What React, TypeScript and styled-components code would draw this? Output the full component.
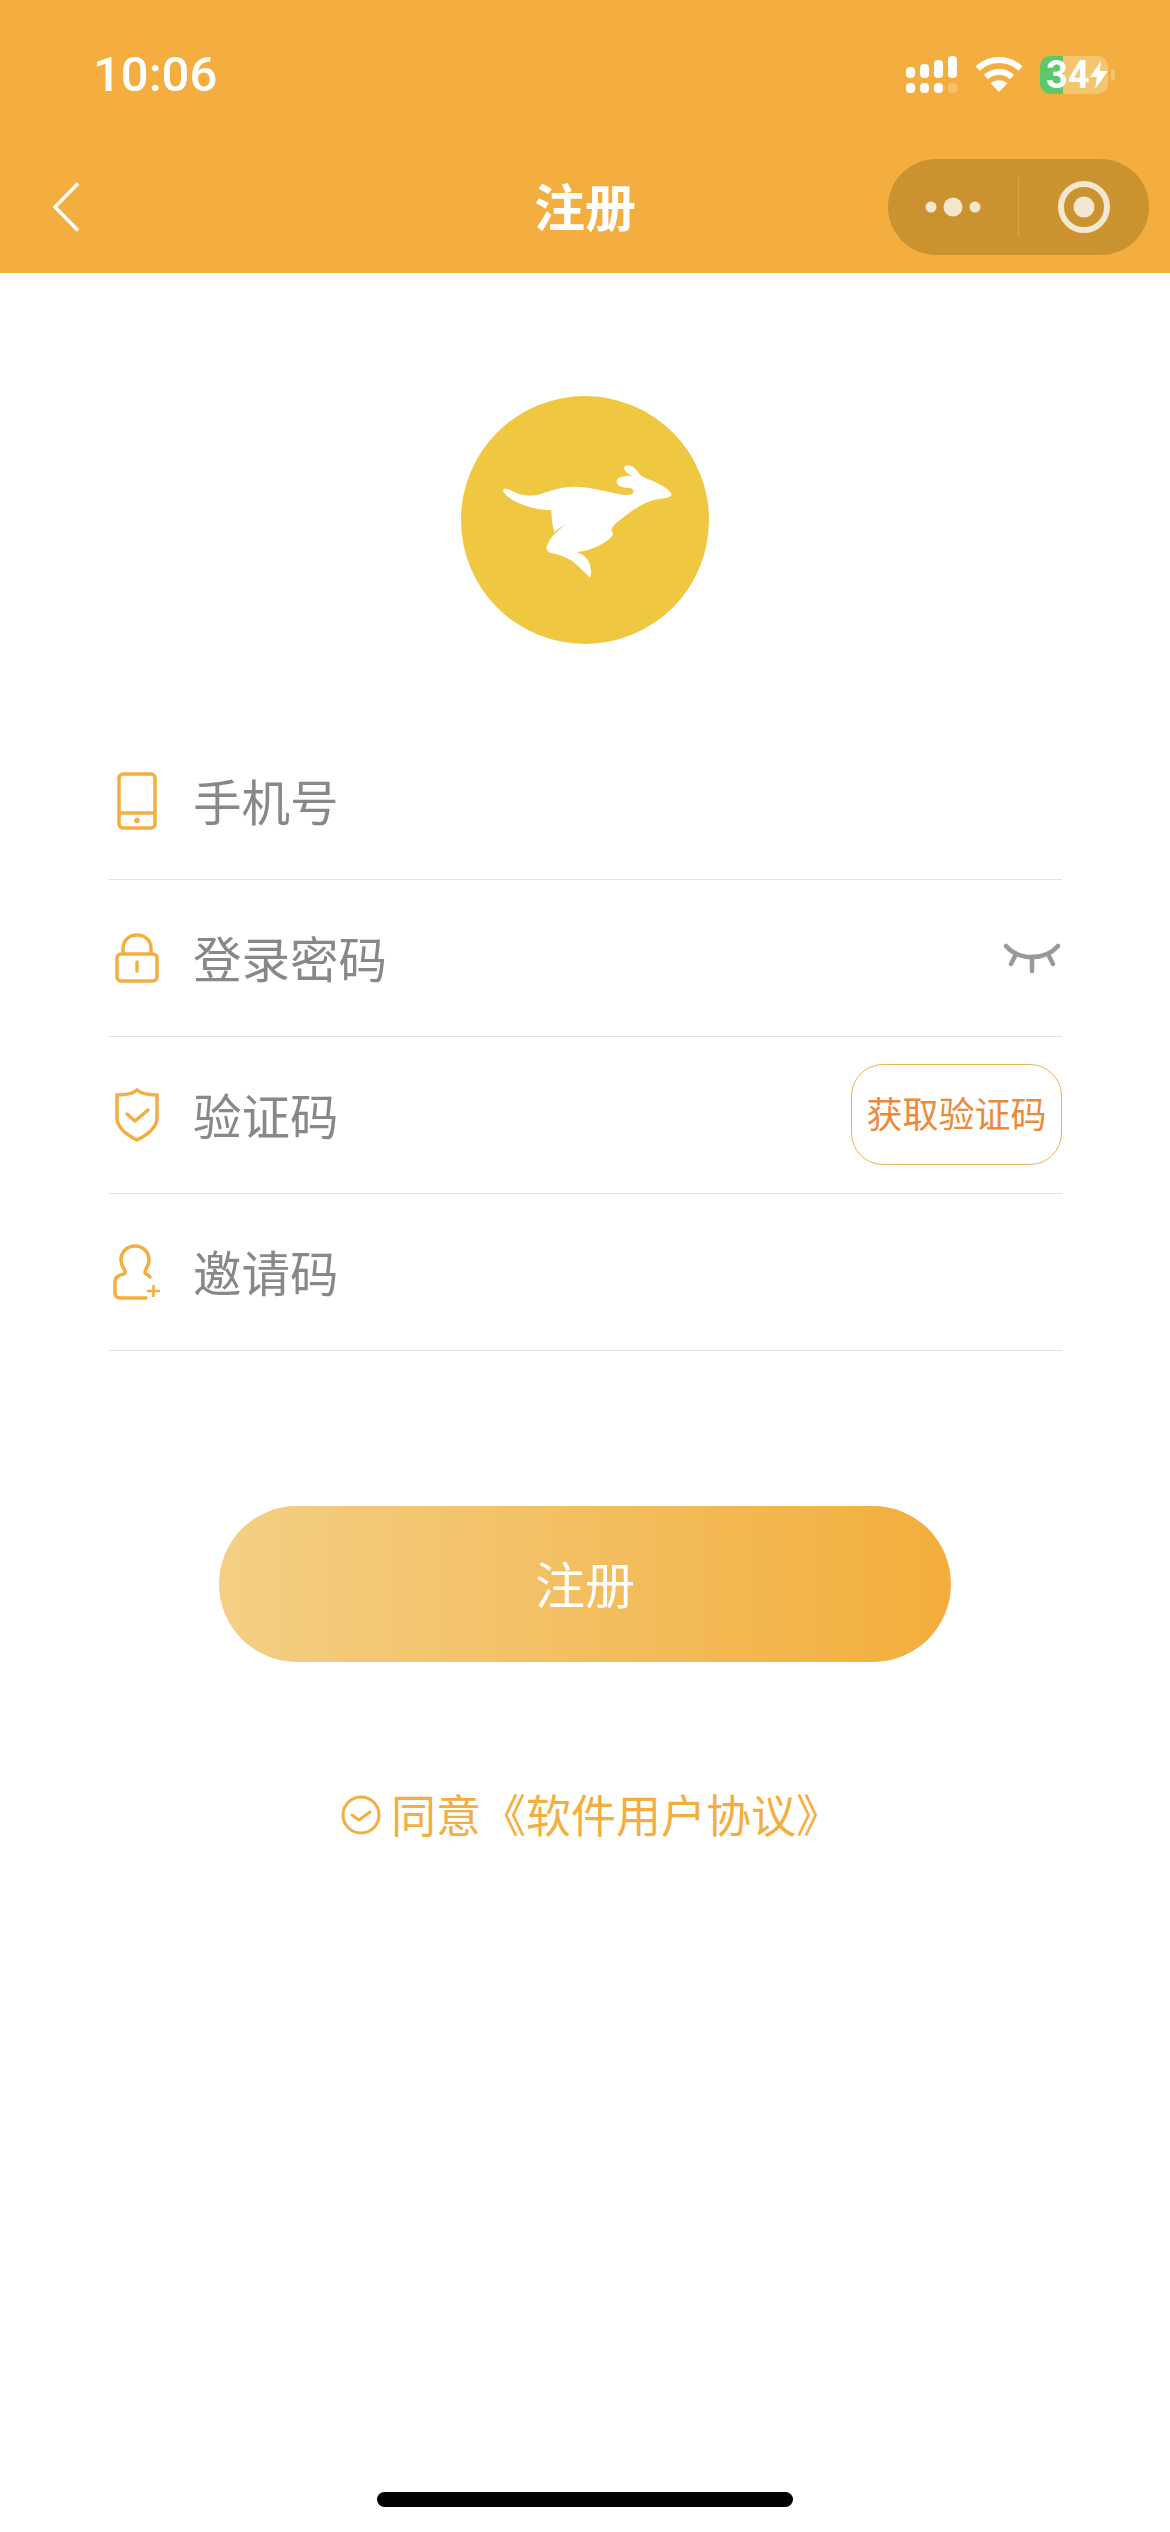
import React from 'react';
import styled, { createGlobalStyle } from 'styled-components';

const ORANGE = '#f4ae3f';
const CJK = '"Noto Sans CJK SC", "Liberation Sans", sans-serif';

const GlobalStyle = createGlobalStyle`
  html, body {
    margin: 0;
    padding: 0;
    background: #fff;
  }
  * {
    box-sizing: border-box;
  }
`;

const FIELDS = [
  { key: 'phone', label: '手机号' },
  { key: 'lock', label: '登录密码' },
  { key: 'shield', label: '验证码' },
  { key: 'invite', label: '邀请码' },
];

const PhoneIcon = () => (
  <svg width="40" height="58" viewBox="0 0 40 58" fill="none" stroke={ORANGE} strokeWidth="3.5">
    <rect x="2" y="2" width="36" height="54" rx="4" />
    <path d="M2 41h36" />
    <circle cx="20" cy="48.5" r="2.8" fill={ORANGE} stroke="none" />
  </svg>
);

const LockIcon = () => (
  <svg width="44" height="50" viewBox="0 0 44 50" fill="none" stroke={ORANGE} strokeWidth="3.5">
    <rect x="2" y="21" width="40" height="27" rx="4" />
    <path d="M8 21v-5.500C8 7.500 14 2 22 2s14 5.500 14 13.500V21" />
    <path d="M22 29v9" strokeLinecap="round" />
  </svg>
);

const ShieldIcon = () => (
  <svg width="44" height="54" viewBox="0 0 44 54" fill="none" stroke={ORANGE} strokeWidth="3.5">
    <path d="M22 2c4 3.500 11 5 20 5v23c0 10-10 17-20 22C12 47 2 40 2 30V7c9 0 16-1.500 20-5z" />
    <path d="M12 26l8 7 13-11" strokeLinecap="round" strokeLinejoin="round" />
  </svg>
);

const InviteIcon = () => (
  <svg width="48" height="56" viewBox="0 0 48 56" fill="none" stroke={ORANGE} strokeWidth="3.5">
    <path
      d="M33 54H7c-3 0-5-2-5-5V38c0-4 3-7 9-8 2-1 1-3 0-5-2-3-3-6-3-9C8 8 14 2 22 2s14 6 14 14c0 3-1 6-3 9-1 2-2 4 0 5 2 1 3 1 4 3"
      strokeLinecap="round"
    />
    <path d="M34 47h13M40.500 41v12" strokeWidth="2.500" />
  </svg>
);

const FIELD_ICONS: Record<string, React.ReactNode> = {
  phone: <PhoneIcon />,
  lock: <LockIcon />,
  shield: <ShieldIcon />,
  invite: <InviteIcon />,
};

const App = () => {
  return (
    <Page>
      <GlobalStyle />
      <Header>
        <StatusBar>
          <Time>10:06</Time>
          <StatusIcons>
            <svg width="52" height="38" viewBox="0 0 52 38" fill="#fff">
              <rect x="0" y="11" width="9" height="11" rx="4" />
              <rect x="14" y="8" width="9" height="14" rx="4" />
              <rect x="28" y="4" width="9" height="18" rx="4" />
              <rect x="42" y="0" width="9" height="22" rx="4" />
              <rect x="0" y="27" width="9" height="10" rx="4" />
              <rect x="14" y="27" width="9" height="10" rx="4" />
              <rect x="28" y="27" width="9" height="10" rx="4" />
              <rect x="42" y="27" width="9" height="10" rx="4" opacity="0.25" />
            </svg>
            <svg width="48" height="36" viewBox="0 0 48 36" fill="none" stroke="#fff" strokeWidth="6">
              <path d="M2.500 11.500C8.500 6 16 3 24 3s15.500 3 21.500 8.500" />
              <path d="M11 20c3.500-3.300 8-5 13-5s9.500 1.700 13 5" />
              <path d="M24 35l-8.500-8.800c2.300-2 5.200-3 8.500-3s6.200 1 8.500 3z" fill="#fff" stroke="none" />
            </svg>
            <BatteryWrap>
              <Battery>
                <BatteryText>34</BatteryText>
                <svg width="18" height="28" viewBox="0 0 18 28" fill="#fff">
                  <path d="M11 0L0 16h7l-2 12L18 10h-8z" />
                </svg>
              </Battery>
              <BatteryNub />
            </BatteryWrap>
          </StatusIcons>
        </StatusBar>
        <NavBar>
          <BackButton>
            <svg width="28" height="50" viewBox="0 0 28 50" fill="none" stroke="#fff" strokeWidth="3.5">
              <path d="M26 1.500L3 25l23 23.500" />
            </svg>
          </BackButton>
          <Title>注册</Title>
          <Capsule>
            <CapsuleCell>
              <svg width="56" height="24" viewBox="0 0 56 24" fill="#f3e7cf">
                <circle cx="6" cy="12" r="5.500" />
                <circle cx="28" cy="12" r="9.500" />
                <circle cx="50" cy="12" r="5.500" />
              </svg>
            </CapsuleCell>
            <CapsuleDivider />
            <CapsuleCell>
              <svg width="52" height="52" viewBox="0 0 52 52" fill="none">
                <circle cx="26" cy="26" r="23" stroke="#f3e7cf" strokeWidth="6" />
                <circle cx="26" cy="26" r="10.500" fill="#f3e7cf" />
              </svg>
            </CapsuleCell>
          </Capsule>
        </NavBar>
      </Header>

      <LogoArea>
        <svg width="248" height="248" viewBox="-99 -177 744 744">
          <circle cx="273" cy="195" r="372" fill="#f0c741" />
          <path
            fill="#fff"
            d="M27 106C32 97 45 103 62 112C85 124 115 124 140 117C165 109 190 97 235 95C275 94 320 105 355 113C375 118 400 122 413 118C422 113 420 102 408 98C392 100 372 96 368 82C367 68 385 60 418 63C402 57 388 46 391 36C397 26 415 30 428 46C434 58 445 66 460 72C490 82 525 100 533 118C532 128 515 130 495 132C465 136 430 155 400 178C380 193 355 212 352 225C356 233 360 238 352 245C335 265 295 285 248 292C272 298 288 318 290 340C292 352 291 362 288 368C272 352 255 335 235 318C215 305 190 297 168 293C156 288 155 278 162 265C170 245 190 228 213 210C200 215 190 224 181 232C175 212 172 188 172 166C140 165 105 158 80 147C55 136 30 120 27 106Z"
          />
        </svg>
      </LogoArea>

      <Form>
        {FIELDS.map((field) => (
          <FieldRow key={field.key}>
            <IconSlot>{FIELD_ICONS[field.key]}</IconSlot>
            <Placeholder>{field.label}</Placeholder>
            {field.key === 'lock' && (
              <EyeSlot>
                <svg width="56" height="30" viewBox="0 0 56 30" fill="none" stroke="#999" strokeWidth="4.5" strokeLinecap="round">
                  <path d="M2 3c7 8 16 11 26 11s19-3 26-11" />
                  <path d="M12 11l-5 10M28 14v14M44 11l5 10" />
                </svg>
              </EyeSlot>
            )}
            {field.key === 'shield' && <CodeButton>获取验证码</CodeButton>}
          </FieldRow>
        ))}
      </Form>

      <SubmitButton>注册</SubmitButton>

      <Agreement>
        <svg width="40" height="40" viewBox="0 0 40 40" fill="none" stroke={ORANGE} strokeWidth="3">
          <circle cx="20" cy="20" r="18" />
          <path d="M11 20l7 5 11-8" strokeLinecap="round" strokeLinejoin="round" />
        </svg>
        <AgreementText>同意《软件用户协议》</AgreementText>
      </Agreement>

      <HomeIndicator />
    </Page>
  );
};

const Page = styled.div`
  width: 1170px;
  min-height: 2532px;
  display: flex;
  flex-direction: column;
  background: #fff;
  font-family: ${CJK};
`;

const Header = styled.header`
  height: 273px;
  background: ${ORANGE};
  display: flex;
  flex-direction: column;
`;

const StatusBar = styled.div`
  height: 149px;
  display: flex;
  align-items: center;
  justify-content: space-between;
  padding: 0 55px 0 93px;
`;

const Time = styled.span`
  font-family: Roboto, 'Liberation Sans', sans-serif;
  font-size: 49px;
  font-weight: 500;
  color: #fff;
`;

const StatusIcons = styled.div`
  display: flex;
  align-items: center;
  gap: 17px;
`;

const BatteryWrap = styled.div`
  display: flex;
  align-items: center;
  gap: 3px;
`;

const Battery = styled.div`
  width: 68px;
  height: 38px;
  border-radius: 10px;
  display: flex;
  align-items: center;
  padding-left: 6px;
  background: linear-gradient(to right, #5ec869 34%, #f3c56e 34%);
`;

const BatteryText = styled.span`
  font-family: Roboto, 'Liberation Sans', sans-serif;
  font-size: 38px;
  font-weight: 700;
  line-height: 38px;
  color: #fff;
`;

const BatteryNub = styled.div`
  width: 4px;
  height: 12px;
  border-radius: 0 4px 4px 0;
  background: #f3c56e;
`;

const NavBar = styled.div`
  flex: 1;
  display: grid;
  grid-template-columns: 1fr auto 1fr;
  align-items: center;
  padding: 0 21px 9px;
`;

const BackButton = styled.div`
  display: flex;
  align-items: center;
  padding-left: 31px;
`;

const Title = styled.h1`
  margin: 0;
  padding-bottom: 3px;
  font-size: 51px;
  font-weight: 700;
  color: #fff;
`;

const Capsule = styled.div`
  justify-self: end;
  width: 261px;
  height: 96px;
  border-radius: 48px;
  display: flex;
  align-items: center;
  background: #cb9330;
`;

const CapsuleCell = styled.div`
  flex: 1;
  display: flex;
  align-items: center;
  justify-content: center;
`;

const CapsuleDivider = styled.div`
  width: 1px;
  height: 60px;
  background: #d9a545;
`;

const LogoArea = styled.div`
  margin-top: 123px;
  height: 248px;
  display: flex;
  justify-content: center;
`;

const Form = styled.div`
  margin-top: 79px;
  padding: 0 108px;
  display: flex;
  flex-direction: column;
`;

const FieldRow = styled.div`
  height: 157px;
  display: flex;
  align-items: center;
  border-bottom: 1px solid #e3e3e3;
`;

const IconSlot = styled.div`
  width: 58px;
  margin-right: 27px;
  display: flex;
  justify-content: center;
`;

const Placeholder = styled.span`
  flex: 1;
  padding-bottom: 3px;
  font-size: 48.500px;
  color: #888;
`;

const EyeSlot = styled.div`
  display: flex;
  align-items: center;
  padding-right: 2px;
`;

const CodeButton = styled.div`
  width: 211px;
  height: 101px;
  margin-bottom: 2px;
  padding-bottom: 4px;
  border: 1.500px solid #e9b25e;
  border-radius: 32px;
  display: flex;
  align-items: center;
  justify-content: center;
  font-size: 36px;
  color: #ec8a3c;
`;

const SubmitButton = styled.div`
  margin: 155px 0 0 219px;
  width: 732px;
  height: 156px;
  padding-bottom: 4px;
  border-radius: 78px;
  display: flex;
  align-items: center;
  justify-content: center;
  font-size: 50px;
  color: #fff;
  background: linear-gradient(to right, #f3cf85, #f3ae3c);
`;

const Agreement = styled.div`
  margin-top: 123px;
  height: 60px;
  padding-left: 12px;
  display: flex;
  align-items: center;
  justify-content: center;
  gap: 10px;
`;

const AgreementText = styled.span`
  padding-bottom: 4px;
  font-size: 45px;
  color: ${ORANGE};
`;

const HomeIndicator = styled.div`
  width: 416px;
  height: 15px;
  margin: auto auto 25px;
  border-radius: 8px;
  background: #000;
`;

export default App;
